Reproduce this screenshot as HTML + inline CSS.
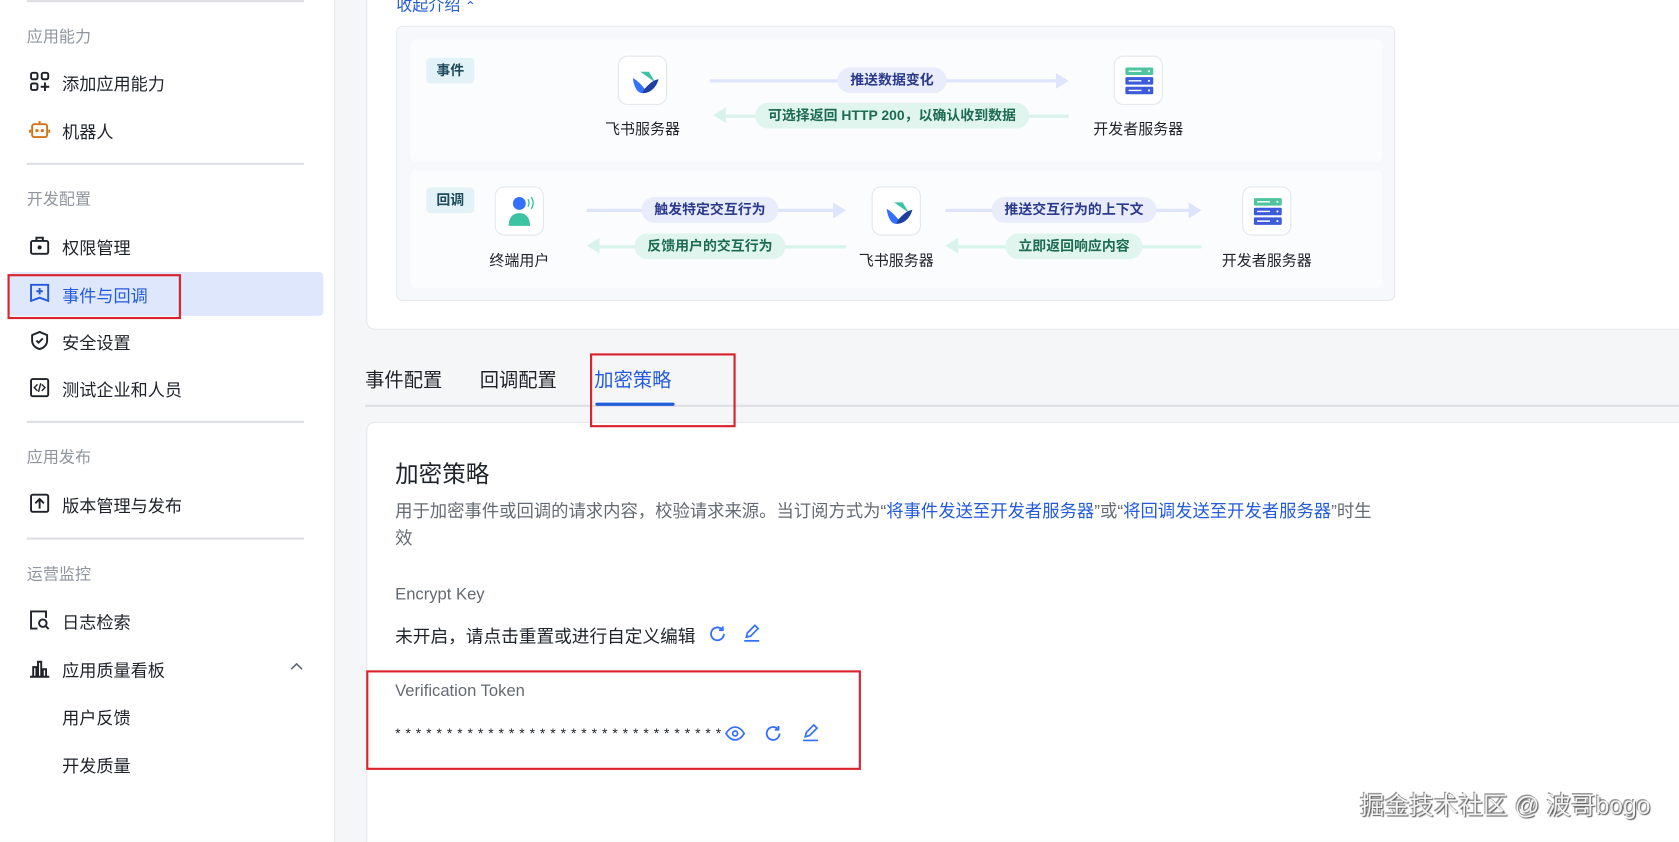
<!DOCTYPE html>
<html><head><meta charset="utf-8"><style>
*{margin:0;padding:0;box-sizing:border-box}
html,body{width:1679px;height:841px;overflow:hidden;background:#f5f6f7}
#w{position:absolute;left:0;top:0;width:1568px;height:786px;overflow:hidden;transform:scale(1.07079);transform-origin:0 0;font-family:"Liberation Sans","Noto Sans CJK SC",sans-serif;color:#1f2329}
.a{position:absolute;white-space:nowrap}
.side{position:absolute;left:0;top:0;width:313px;height:800px;background:#fff;border-right:1px solid #e4e6ea}
.sec{position:absolute;left:25px;font-size:15px;color:#8f959e}
.it{position:absolute;left:58px;font-size:16px;color:#1f2329}
.hr{position:absolute;left:25px;width:259px;height:2px;background:#dee0e3}
.ic{position:absolute;left:27px;width:20px;height:20px}
.card{position:absolute;left:342px;top:-10px;width:1240px;height:318px;background:#fff;border:1px solid #e6e8eb;border-radius:8px}
.dia{position:absolute;left:370px;top:24px;width:933px;height:257px;background:#f6f8fb;border:1px solid #e5e9ef;border-radius:6px}
.row{position:absolute;left:12px;width:908px;background:#fbfcfe;border-radius:6px}
.tag{position:absolute;width:45px;height:24px;background:#e3f2f6;border-radius:4px;font-size:13px;font-weight:bold;color:#1e4a5c;text-align:center;line-height:24px}
.box{position:absolute;width:46px;height:46px;background:#fff;border:1px solid #e3e6ec;border-radius:9px}
.lab{position:absolute;font-size:14px;color:#1f2329;transform:translateX(-50%)}
.ln{position:absolute;height:3px}
.pill{position:absolute;height:24px;line-height:24px;font-size:13px;border-radius:12px;padding:0 12px;transform:translateX(-50%);font-weight:bold}
.pb{background:#e8ecfb;color:#2b3a8c}
.pg{background:#e1f5ef;color:#1d6b52}
.tab{position:absolute;top:341px;font-size:18px;color:#1f2329}
.lbl{position:absolute;left:369px;font-size:15.5px;color:#646a73}
.red{position:absolute;border:2px solid #d9232d}
</style></head><body><div id="w">
<div class="side">
<div class="hr" style="top:0"></div>
<div class="sec" style="top:23px">应用能力</div>
<svg class="ic" style="top:66px" viewBox="0 0 20 20" fill="none" stroke="#1f2329" stroke-width="1.8"><rect x="2" y="2" width="6" height="6" rx="1.5"/><rect x="12" y="2" width="6" height="6" rx="1.5"/><rect x="2" y="12" width="6" height="6" rx="1.5"/><path d="M15 11v8M11 15h8"/></svg>
<div class="it" style="top:65px">添加应用能力</div>
<svg class="ic" style="top:111px" viewBox="0 0 20 20" fill="none" stroke="#d1741a" stroke-width="1.8"><rect x="3" y="5" width="14" height="12" rx="2"/><path d="M10 2v3M1 10v3M19 10v3"/><circle cx="7.5" cy="11" r=".6" fill="#d1741a"/><circle cx="12.5" cy="11" r=".6" fill="#d1741a"/></svg>
<div class="it" style="top:110px">机器人</div>
<div class="hr" style="top:152px"></div>
<div class="sec" style="top:175px">开发配置</div>
<svg class="ic" style="top:219px" viewBox="0 0 20 20" fill="none" stroke="#1f2329" stroke-width="1.8"><rect x="2" y="6" width="16" height="12" rx="1.5"/><path d="M7 6V3h6v3"/><circle cx="10" cy="12" r="1" fill="#1f2329"/></svg>
<div class="it" style="top:218px">权限管理</div>
<div class="a" style="left:8px;top:254px;width:294px;height:41px;background:#dfe7fc;border-radius:4px"></div>
<svg class="ic" style="top:263px" viewBox="0 0 20 20" fill="none" stroke="#245bdb" stroke-width="1.8"><path d="M2 3h16v15l-8-3-8 3z"/><path d="M10 6v6M7 9h6"/></svg>
<div class="it" style="top:263px;color:#245bdb">事件与回调</div>
<svg class="ic" style="top:308px" viewBox="0 0 20 20" fill="none" stroke="#1f2329" stroke-width="1.8"><path d="M10 2l7 3v5c0 4-3 7-7 8-4-1-7-4-7-8V5z"/><path d="M7 10l2 2 4-4"/></svg>
<div class="it" style="top:307px">安全设置</div>
<svg class="ic" style="top:352px" viewBox="0 0 20 20" fill="none" stroke="#1f2329" stroke-width="1.8"><rect x="2" y="2" width="16" height="16" rx="1.5"/><path d="M8 7l-3 3 3 3M12 7l3 3-3 3M11 6l-2 8" stroke-width="1.3"/></svg>
<div class="it" style="top:351px">测试企业和人员</div>
<div class="hr" style="top:393px"></div>
<div class="sec" style="top:416px">应用发布</div>
<svg class="ic" style="top:460px" viewBox="0 0 20 20" fill="none" stroke="#1f2329" stroke-width="1.8"><rect x="2" y="2" width="16" height="16" rx="1.5"/><path d="M10 15V6M6 10l4-4 4 4"/></svg>
<div class="it" style="top:459px">版本管理与发布</div>
<div class="hr" style="top:502px"></div>
<div class="sec" style="top:525px">运营监控</div>
<svg class="ic" style="top:569px" viewBox="0 0 20 20" fill="none" stroke="#1f2329" stroke-width="1.8"><path d="M16 8V2H2v16h6"/><circle cx="13" cy="13" r="3.5"/><path d="M16 16l2.5 2.5"/></svg>
<div class="it" style="top:568px">日志检索</div>
<svg class="ic" style="top:614px" viewBox="0 0 20 20" fill="none" stroke="#1f2329" stroke-width="1.8"><path d="M1 18h18M4 18V9h3v9M8.5 18V4h3v14M13 18v-7h3v7"/></svg>
<div class="it" style="top:613px">应用质量看板</div>
<svg class="a" style="left:270px;top:618px" width="14" height="10" viewBox="0 0 14 10" fill="none" stroke="#646a73" stroke-width="1.5"><path d="M2 7l5-5 5 5"/></svg>
<div class="it" style="top:657px">用户反馈</div>
<div class="it" style="top:702px">开发质量</div>
</div>
<div class="red" style="left:7px;top:256px;width:162px;height:42px"></div>

<div class="card"></div>
<div class="a" style="left:370px;top:-6px;font-size:15px;color:#245bdb">收起介绍 <span style="font-size:12px">⌃</span></div>
<div class="dia">
<div class="row" style="top:12px;height:114px"></div>
<div class="row" style="top:134px;height:110px"></div>
</div>
<div class="tag" style="left:398px;top:54px">事件</div>
<div class="box" style="left:577px;top:52px"><svg width="46" height="46" viewBox="0 0 46 46"><path d="M20 14h8l6 10z" fill="#3ec3a2"/><path d="M13 20c4 2 8 6 11 10 3-3 7-8 13-9-2 7-7 13-15 13-5 0-8-6-9-14z" fill="#3370ff"/><path d="M24 30c3-3 7-8 13-9-2 7-7 13-15 13z" fill="#1f3fa0"/></svg></div>
<div class="lab" style="left:600px;top:110px">飞书服务器</div>
<div class="ln" style="left:663px;top:74px;width:325px;background:#dde4fb"></div>
<svg class="a" style="left:986px;top:68px" width="12" height="15"><path d="M0 0l12 7.5L0 15z" fill="#dde4fb"/></svg>
<div class="pill pb" style="left:833px;top:63px">推送数据变化</div>
<div class="ln" style="left:678px;top:107px;width:320px;background:#d8f3ea"></div>
<svg class="a" style="left:666px;top:100px" width="12" height="15"><path d="M12 0L0 7.5 12 15z" fill="#d8f3ea"/></svg>
<div class="pill pg" style="left:833px;top:96px">可选择返回 HTTP 200，以确认收到数据</div>
<div class="box" style="left:1040px;top:52px"><svg width="46" height="46" viewBox="0 0 46 46"><rect x="10" y="10" width="26" height="7" rx="1" fill="#4fc49e"/><rect x="10" y="19" width="26" height="7" rx="1" fill="#3b5bdb"/><rect x="10" y="28" width="26" height="7" rx="1" fill="#3b5bdb"/><path d="M13 13.5h12M13 22.5h12M13 31.5h12" stroke="#fff" stroke-width="1.3"/><circle cx="32" cy="13.5" r="1" fill="#fff"/><circle cx="32" cy="22.5" r="1" fill="#fff"/><circle cx="32" cy="31.5" r="1" fill="#fff"/></svg></div>
<div class="lab" style="left:1063px;top:110px">开发者服务器</div>
<div class="tag" style="left:398px;top:175px">回调</div>
<div class="box" style="left:462px;top:174px"><svg width="46" height="46" viewBox="0 0 46 46"><circle cx="22" cy="15" r="6" fill="#3370ff"/><path d="M12 36c0-8 4-12 10-12s10 4 10 12z" fill="#3ec3a2"/><path d="M30 11c1.5 2 1.5 5 0 7M33 9c2.5 3 2.5 8 0 11" stroke="#3ec3a2" stroke-width="1.3" fill="none"/></svg></div>
<div class="lab" style="left:485px;top:233px">终端用户</div>
<div class="ln" style="left:548px;top:195px;width:232px;background:#dde4fb"></div>
<svg class="a" style="left:778px;top:189px" width="12" height="15"><path d="M0 0l12 7.5L0 15z" fill="#dde4fb"/></svg>
<div class="pill pb" style="left:663px;top:184px">触发特定交互行为</div>
<div class="ln" style="left:560px;top:229px;width:230px;background:#d8f3ea"></div>
<svg class="a" style="left:548px;top:222px" width="12" height="15"><path d="M12 0L0 7.5 12 15z" fill="#d8f3ea"/></svg>
<div class="pill pg" style="left:663px;top:218px">反馈用户的交互行为</div>
<div class="box" style="left:814px;top:174px"><svg width="46" height="46" viewBox="0 0 46 46"><path d="M20 14h8l6 10z" fill="#3ec3a2"/><path d="M13 20c4 2 8 6 11 10 3-3 7-8 13-9-2 7-7 13-15 13-5 0-8-6-9-14z" fill="#3370ff"/><path d="M24 30c3-3 7-8 13-9-2 7-7 13-15 13z" fill="#1f3fa0"/></svg></div>
<div class="lab" style="left:837px;top:233px">飞书服务器</div>
<div class="ln" style="left:883px;top:195px;width:229px;background:#dde4fb"></div>
<svg class="a" style="left:1110px;top:189px" width="12" height="15"><path d="M0 0l12 7.5L0 15z" fill="#dde4fb"/></svg>
<div class="pill pb" style="left:1003px;top:184px">推送交互行为的上下文</div>
<div class="ln" style="left:895px;top:229px;width:227px;background:#d8f3ea"></div>
<svg class="a" style="left:883px;top:222px" width="12" height="15"><path d="M12 0L0 7.5 12 15z" fill="#d8f3ea"/></svg>
<div class="pill pg" style="left:1003px;top:218px">立即返回响应内容</div>
<div class="box" style="left:1160px;top:174px"><svg width="46" height="46" viewBox="0 0 46 46"><rect x="10" y="10" width="26" height="7" rx="1" fill="#4fc49e"/><rect x="10" y="19" width="26" height="7" rx="1" fill="#3b5bdb"/><rect x="10" y="28" width="26" height="7" rx="1" fill="#3b5bdb"/><path d="M13 13.5h12M13 22.5h12M13 31.5h12" stroke="#fff" stroke-width="1.3"/><circle cx="32" cy="13.5" r="1" fill="#fff"/><circle cx="32" cy="22.5" r="1" fill="#fff"/><circle cx="32" cy="31.5" r="1" fill="#fff"/></svg></div>
<div class="lab" style="left:1183px;top:233px">开发者服务器</div>

<div class="tab" style="left:341px">事件配置</div>
<div class="tab" style="left:448px">回调配置</div>
<div class="tab" style="left:555px;color:#245bdb">加密策略</div>
<div class="a" style="left:341px;top:378px;width:1240px;height:2px;background:#dee0e3"></div>
<div class="a" style="left:556px;top:376px;width:74px;height:3px;background:#245bdb;border-radius:2px"></div>

<div class="a" style="left:342px;top:394px;width:1240px;height:420px;background:#fff;border:1px solid #e6e8eb;border-radius:8px"></div>
<div class="red" style="left:551px;top:330px;width:136px;height:69px"></div>
<div class="a" style="left:369px;top:425px;font-size:22px">加密策略</div>
<div class="a" style="left:369px;top:466px;font-size:16.2px;color:#646a73;line-height:25px">用于加密事件或回调的请求内容，校验请求来源。当订阅方式为“<span style="color:#245bdb">将事件发送至开发者服务器</span>”或“<span style="color:#245bdb">将回调发送至开发者服务器</span>”时生<br>效</div>
<div class="lbl" style="top:547px">Encrypt Key</div>
<div class="a" style="left:369px;top:581px;font-size:16.5px">未开启，请点击重置或进行自定义编辑</div>
<svg class="a" style="left:661px;top:583px" width="18" height="18" viewBox="0 0 18 18" fill="none" stroke="#3370ff" stroke-width="1.7"><path d="M15 9a6 6 0 1 1-2-4.5"/><path d="M14 2v3.5h-3.5"/></svg>
<svg class="a" style="left:693px;top:582px" width="18" height="18" viewBox="0 0 18 18" fill="none" stroke="#3370ff" stroke-width="1.6"><path d="M4 13l1-4 7-7 3 3-7 7z"/><path d="M2 16.5h14"/></svg>
<div class="lbl" style="top:637px">Verification Token</div>
<div class="a" style="left:369px;top:677px;font-size:13px;color:#1f2329;letter-spacing:4.6px">********************************</div>
<svg class="a" style="left:677px;top:677px" width="19" height="16" viewBox="0 0 19 16" fill="none" stroke="#3370ff" stroke-width="1.6"><path d="M1 8c2.5-4 5-6 8.5-6S15.5 4 18 8c-2.5 4-5 6-8.5 6S3.5 12 1 8z"/><circle cx="9.5" cy="8" r="2.3"/></svg>
<svg class="a" style="left:713px;top:676px" width="18" height="18" viewBox="0 0 18 18" fill="none" stroke="#3370ff" stroke-width="1.7"><path d="M15 9a6 6 0 1 1-2-4.5"/><path d="M14 2v3.5h-3.5"/></svg>
<svg class="a" style="left:748px;top:675px" width="18" height="18" viewBox="0 0 18 18" fill="none" stroke="#3370ff" stroke-width="1.6"><path d="M4 13l1-4 7-7 3 3-7 7z"/><path d="M2 16.5h14"/></svg>
<div class="red" style="left:342px;top:626px;width:462px;height:93px"></div>

<div class="a" style="left:1270px;top:733px;font-size:23px;color:#f2f2f2;text-shadow:1px 1px 1px #555,-1px -1px 0 #999">掘金技术社区 @ 波哥bogo</div>
</div></body></html>
